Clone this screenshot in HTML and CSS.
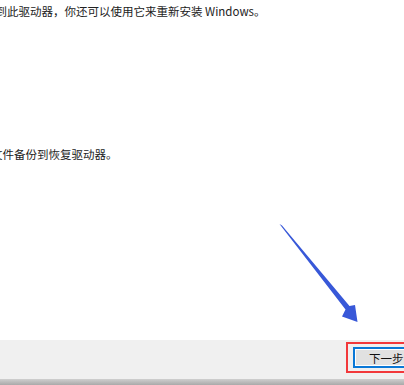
FILE: index.html
```html
<!DOCTYPE html>
<html lang="zh-CN">
<head>
  <meta charset="UTF-8">
  <meta name="viewport" content="width=device-width, initial-scale=1.0">
  <title>创建恢复驱动器</title>
  <link rel="stylesheet" href="styles.css">
</head>
<body>

<div class="page">
  <div class="content">
    <p class="line line-first">到此驱动器，你还可以使用它来重新安装 Windows。</p>
    <p class="line line-second">文件备份到恢复驱动器。</p>
  </div>

  <div class="footer">
    <div class="mark">
      <button class="btn-next" type="button">下一步</button>
    </div>
  </div>
  <div class="shadow"></div>

  <!-- annotation arrow -->
  <svg class="arrow" width="404" height="385" viewBox="0 0 404 385">
    <polygon points="279.5,224 282,225.5 349.5,306 355,305 357.5,322 342,316.5 345.5,309.5" fill="#3858d8"/>
  </svg>
</div>

</body>
</html>
```

FILE: styles.css
```css
body {
  margin: 0;
  padding: 0;
  background-color: #fff;
  font-family: "Noto Sans CJK SC", "Microsoft YaHei", sans-serif;
  overflow: hidden;
}
.page {
  position: relative;
  width: 404px;
  height: 385px;
  overflow: hidden;
}
.content {
  height: 340px;
}
.line {
  margin: 0;
  font-size: 11.5px;
  line-height: 16px;
  color: #222;
  white-space: nowrap;
}
.line-first {
  padding-top: 3px;
  margin-left: -4.5px;
}
.line-second {
  margin-top: 127px;
  margin-left: -9px;
}
.footer {
  height: 39px;
  background-color: #f0f0f0;
  display: flex;
  align-items: flex-start;
  justify-content: flex-end;
  padding-top: 2px;
  box-sizing: border-box;
}
.mark {
  border: 2.5px solid #f2383b;
  padding: 3px 5px;
  margin-right: -36px;
}
.btn-next {
  display: block;
  width: 80px;
  height: 21px;
  padding: 0 0 0 14px;
  text-align: left;
  font-family: inherit;
  font-size: 11.5px;
  color: #111;
  background-color: #e1e1e1;
  border: 2px solid #0a78d7;
  box-shadow: inset 0 0 0 1px #fff;
}
.shadow {
  height: 6px;
  background: linear-gradient(#cfcfcf, #a9a9a9);
}
.arrow {
  position: absolute;
  left: 0;
  top: 0;
}
```
